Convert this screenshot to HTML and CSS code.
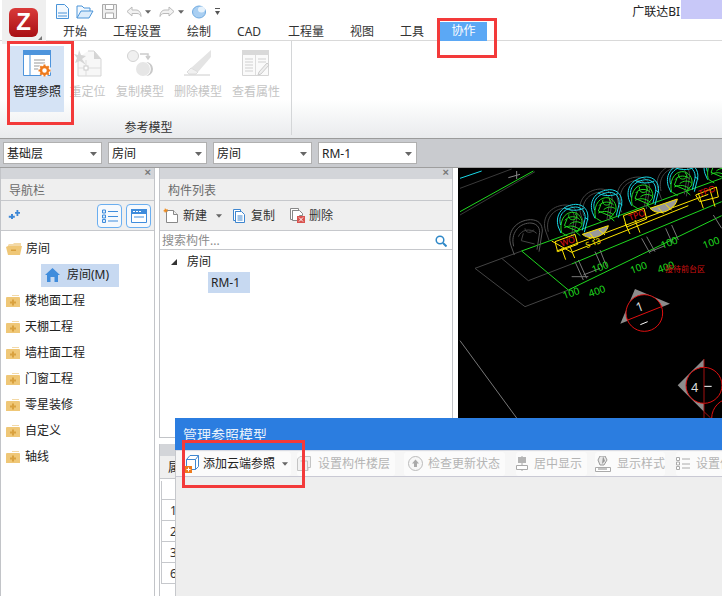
FILE: index.html
```html
<!DOCTYPE html>
<html lang="zh-CN">
<head>
<meta charset="utf-8">
<title>管理参照模型</title>
<link rel="stylesheet" href="styles.css">
</head>
<body>
<svg class="defs" width="0" height="0" aria-hidden="true">
  <symbol id="folder" viewBox="0 0 14 12">
    <path d="M6 0h7v1H6z" fill="#f3d9a6"/>
    <path d="M1 2h12a1 1 0 0 1 1 1v9H0V3a1 1 0 0 1 1-1z" fill="#efc777"/>
    <path d="M6 4.500h2v2h2v2H8v2H6v-2H4v-2h2z" fill="#d9a13f"/>
  </symbol>
  <symbol id="caret" viewBox="0 0 7 4"><path d="M0 0h7L3.500 4z" fill="#666"/></symbol>
</svg>
<div class="app">
  <header class="top">
    <div class="logo-cell">
      <div class="logo">Z</div>
      <svg class="logo-grip" width="4" height="4" viewBox="0 0 4 4"><path d="M4 0v4H0z" fill="#777"/></svg>
    </div>
    <div class="top-main">
      <div class="qat">
        <svg width="15" height="15" viewBox="0 0 15 15"><path d="M1.500 .5h8l4 4v10h-12z" fill="#f4f9fe" stroke="#4a94d8"/><path d="M3 9h9M3 12h9" stroke="#4a94d8"/></svg>
        <svg class="q1" width="18" height="15" viewBox="0 0 18 15"><path d="M1 14V2h5l2 2h6v3" fill="#f4f9fe" stroke="#4a94d8"/><path d="M1 14l4-7h12l-4 7z" fill="#dcecfb" stroke="#4a94d8"/></svg>
        <svg class="q2" width="15" height="15" viewBox="0 0 15 15"><path d="M.5 .5h14v14H.5z" fill="#eee" stroke="#aaa"/><path d="M3.500 .5h8v5h-8zM3.500 9h8v5.500h-8z" fill="#fff" stroke="#aaa"/></svg>
        <svg class="q3" width="16" height="12" viewBox="0 0 16 12"><path d="M6 1L1 5.500 6 10V7.500h5c2 0 3 1 4 3 0-4-2-6.500-5-6.500H6z" fill="#f2f2f2" stroke="#bbb"/></svg>
        <svg class="q4" width="6" height="4"><use href="#caret"/></svg>
        <svg class="q5" width="16" height="12" viewBox="0 0 16 12"><path d="M10 1l5 4.500L10 10V7.500H5c-2 0-3 1-4 3 0-4 2-6.500 5-6.500h4z" fill="#f2f2f2" stroke="#bbb"/></svg>
        <svg class="q4" width="6" height="4"><use href="#caret"/></svg>
        <svg class="q6" width="15" height="14" viewBox="0 0 15 14"><ellipse cx="7" cy="7" rx="6.500" ry="6" fill="#a9cff2" stroke="#6ea9df"/><ellipse cx="9.500" cy="4.500" rx="3.500" ry="3" fill="#e6f2fc"/></svg>
        <svg class="q7" width="5" height="7" viewBox="0 0 5 7"><path d="M0 0h5v1H0zM0 3h5L2.500 7z" fill="#555"/></svg>
        <span class="account">广联达BI</span>
        <span class="account-mask"></span>
      </div>
      <nav class="tabs">
        <span class="tab t1">开始</span>
        <span class="tab t2">工程设置</span>
        <span class="tab t3">绘制</span>
        <span class="tab t4">CAD</span>
        <span class="tab t5">工程量</span>
        <span class="tab t6">视图</span>
        <span class="tab t7">工具</span>
        <span class="tab active">协作</span>
      </nav>
    </div>
  </header>

  <section class="ribbon">
    <div class="ribbon-group">
      <div class="ribbon-items">
        <div class="rb rb-on">
          <svg width="28" height="27" viewBox="0 0 28 27">
            <path d="M.5 .5h27v25H.5z" fill="#fff" stroke="#4d94dc"/>
            <path d="M0 0h28v5H0z" fill="#4d94dc"/>
            <path d="M7 5v20" stroke="#4d94dc"/>
            <path d="M11 10h11M11 13h11M11 16h7M11 19h6" stroke="#999"/>
            <circle cx="21.500" cy="20" r="6.500" fill="#fff"/>
            <circle cx="21.500" cy="20.500" r="3.500" fill="#fff" stroke="#ee7a1c" stroke-width="2.500"/>
            <path d="M21.500 14.500v2M21.500 24.500v2M15.500 20.500h2M25.500 20.500h2M17.300 16.300l1.400 1.400M24.300 23.300l1.400 1.400M25.700 16.300l-1.400 1.400M18.700 23.300l-1.400 1.400" stroke="#ee7a1c" stroke-width="2"/>
          </svg>
          <span>管理参照</span>
        </div>
        <div class="rb rb-b">
          <svg width="28" height="27" viewBox="0 0 28 27">
            <path d="M4 8v18h23V9l-7-8h-6" fill="#f7f7f7" stroke="#d5d5d5"/>
            <path d="M20 1l7 8h-7z" fill="#d5d5d5"/>
            <path d="M4 18h23M12 10v16" stroke="#ddd"/>
            <rect x="10" y="16" width="4" height="4" fill="#fff" stroke="#ccc"/>
            <path d="M5 0l2 5 5 1-4 3 4 6-6-4-5 2 2-5-3-4 4 1z" fill="#d5d5d5"/>
          </svg>
          <span>重定位</span>
        </div>
        <div class="rb rb-c">
          <svg width="28" height="27" viewBox="0 0 28 27">
            <circle cx="7" cy="6" r="5.500" fill="#f0f0f0" stroke="#d2d2d2"/>
            <circle cx="17" cy="19" r="7" fill="#e6e6e6"/>
            <path d="M20 12a7.500 7.500 0 0 1 0 14 7 7 0 0 0 0-14z" fill="#c9c9c9"/>
            <path d="M14 4h8v4M20 6l2 3 2-3" fill="none" stroke="#ccc" stroke-width="1.500"/>
          </svg>
          <span>复制模型</span>
        </div>
        <div class="rb rb-d">
          <svg width="28" height="27" viewBox="0 0 28 27">
            <path d="M27 0v7L14 22l-7-4z" fill="#e4e4e4"/>
            <path d="M7 18l7 4-2 2H5l-2-2z" fill="#f1f1f1" stroke="#ddd"/>
            <path d="M0 25h26" stroke="#ccc"/>
          </svg>
          <span>删除模型</span>
        </div>
        <div class="rb rb-e">
          <svg width="28" height="27" viewBox="0 0 28 27">
            <path d="M.5 .5h26v25H.5z" fill="#fafafa" stroke="#d5d5d5"/>
            <path d="M0 0h27v5H0z" fill="#d9d9d9"/>
            <path d="M13.500 5v20" stroke="#ddd"/>
            <path d="M3 9h8M3 12h8M3 15h8M3 18h8M3 21h8M16 9h8M16 12h8" stroke="#d0d0d0"/>
            <path d="M25 13l2 2-8 9-3 1 1-3z" fill="#eee" stroke="#ccc"/>
          </svg>
          <span>查看属性</span>
        </div>
      </div>
      <div class="group-title">参考模型</div>
    </div>
  </section>

  <section class="selectors">
    <div class="sel">基础层<svg width="7" height="4"><use href="#caret"/></svg></div>
    <div class="sel">房间<svg width="7" height="4"><use href="#caret"/></svg></div>
    <div class="sel">房间<svg width="7" height="4"><use href="#caret"/></svg></div>
    <div class="sel">RM-1<svg width="7" height="4"><use href="#caret"/></svg></div>
  </section>

  <main class="work">
    <aside class="panel nav-panel">
      <div class="dock"><span class="x">×</span></div>
      <div class="p-title">导航栏</div>
      <div class="p-tools nav-tools">
        <svg class="pin" width="12" height="9" viewBox="0 0 12 9"><path d="M3 4h2v1.800h1.800v2H5V9H3V7.800H.8v-2H3zM8.500 0h1.800v2H12v1.800h-1.700V6H8.500V3.800H7V2h1.500z" fill="#3d87d6"/></svg>
        <span class="view-btn">
          <svg width="16" height="14" viewBox="0 0 16 14"><path d="M.5 1h3v3h-3zM.5 6h3v3h-3zM.5 10.500h3v3h-3z" fill="#dcebfa" stroke="#3f8cdc"/><path d="M6 2.500h10M6 7.500h10M6 12h10" stroke="#3f8cdc"/></svg>
        </span>
        <span class="view-btn">
          <svg width="16" height="14" viewBox="0 0 16 14"><path d="M.5 .5h15v13H.5z" fill="#fff" stroke="#3f8cdc"/><path d="M0 0h16v5H0z" fill="#3f8cdc"/><path d="M2 2.500h2M5 2.500h2M8 2.500h2" stroke="#fff"/><path d="M3 8h10" stroke="#9fc6ee" stroke-width="2"/></svg>
        </span>
      </div>
      <ul class="nav-tree">
        <li class="open-row">
          <svg width="16" height="12" viewBox="0 0 16 12"><path d="M2 2l1-1h4l1-1h7v3H2z" fill="#f3d9a6"/><path d="M2 3h14l-2 9H2L0 4z" fill="#efc777"/><path d="M5 6.500h5v1.500H5z" fill="#d9a13f"/></svg>
          <span>房间</span>
        </li>
        <li class="sub-row">
          <span class="sub-sel">
            <svg width="15" height="14" viewBox="0 0 15 14"><path d="M7.500 0L15 7h-2v7H9.500V9h-4v5H2V7H0z" fill="#3f8cdc"/></svg>
            <span>房间(M)</span>
          </span>
        </li>
        <li><svg width="14" height="12"><use href="#folder"/></svg><span>楼地面工程</span></li>
        <li><svg width="14" height="12"><use href="#folder"/></svg><span>天棚工程</span></li>
        <li><svg width="14" height="12"><use href="#folder"/></svg><span>墙柱面工程</span></li>
        <li><svg width="14" height="12"><use href="#folder"/></svg><span>门窗工程</span></li>
        <li><svg width="14" height="12"><use href="#folder"/></svg><span>零星装修</span></li>
        <li><svg width="14" height="12"><use href="#folder"/></svg><span>自定义</span></li>
        <li><svg width="14" height="12"><use href="#folder"/></svg><span>轴线</span></li>
      </ul>
    </aside>

    <div class="mid">
      <section class="panel comp-panel">
        <div class="dock"><span class="x">×</span></div>
        <div class="p-title">构件列表</div>
        <div class="p-tools comp-tools">
          <span class="ct ct-new">
            <svg width="15" height="15" viewBox="0 0 15 15"><path d="M3.500 2.500h7l4 4v8h-11z" fill="#fff" stroke="#888"/><path d="M10.500 2.500v4h4" fill="#eee" stroke="#888"/><path d="M2 0l1 1.500L5 1 4 2.500 5 4 3 3.500 2 5 1.500 3.500 0 3l1.500-1z" fill="#ee8a1c"/></svg>
            <span>新建</span>
            <svg class="ct-caret" width="6" height="4"><use href="#caret"/></svg>
          </span>
          <span class="ct ct-copy">
            <svg width="12" height="14" viewBox="0 0 12 14"><path d="M.5 .5h7v2h-5v9h-2z" fill="#fff" stroke="#3f86cf"/><path d="M2.500 2.500h6l3 3v8h-9z" fill="#fff" stroke="#3f86cf"/><path d="M4.500 7h5M4.500 9h5M4.500 11h5" stroke="#3f86cf"/></svg>
            <span>复制</span>
          </span>
          <span class="ct ct-del">
            <svg width="15" height="15" viewBox="0 0 15 15"><path d="M.5 .5h8v2h-6v9h-2z" fill="#fff" stroke="#888"/><path d="M2.500 2.500h7l3 3v2h-3v5h-7z" fill="#fff" stroke="#888"/><rect x="7" y="8" width="8" height="7" fill="#d9534f"/><path d="M9 9.500l4 4M13 9.500l-4 4" stroke="#fff"/></svg>
            <span>删除</span>
          </span>
        </div>
        <div class="search">
          <span>搜索构件...</span>
          <svg width="12" height="12" viewBox="0 0 12 12"><circle cx="5" cy="5" r="3.800" fill="none" stroke="#2f88c8" stroke-width="1.500"/><path d="M8 8l3.500 3.500" stroke="#2f88c8" stroke-width="2"/></svg>
        </div>
        <div class="comp-tree">
          <div class="ct-root">
            <svg width="6" height="6" viewBox="0 0 6 6"><path d="M6 0v6H0z" fill="#333"/></svg>
            <span>房间</span>
          </div>
          <div class="ct-child"><span>RM-1</span></div>
        </div>
      </section>
      <section class="lower">
        <div class="dock"></div>
        <div class="lower-tab">属</div>
        <div class="lower-table">
          <div class="row"></div>
          <div class="row">1</div>
          <div class="row">2</div>
          <div class="row">3</div>
          <div class="row">6</div>
        </div>
      </section>
    </div>

    <div class="cad">
      <svg width="264" height="250" viewBox="9 9 792 750" aria-label="CAD 图纸">
        <defs>
          <g id="seat-back" fill="none" stroke-width="3">
            <path d="M-58 20C-72-22-42-56 0-58 25-58 36-44 36-24L26 38M-50 22C-60-16-36-46-2-48 18-48 28-36 28-20L20 32M-58 20l10 28"/>
          </g>
          <g id="seat" fill="none" stroke-width="3">
            <path stroke="#16d8e6" d="M-40 14C-52-26-24-52 12-54 36-54 52-36 48-10L38 30M-33 8C-43-22-20-44 12-46 30-46 43-30 40-10L32 24M-40 14L-32 32M-22-44C-8-34 20-34 36-42M40-14L50-8"/>
            <path stroke="#1fd81f" d="M-30 32C-38 0-24-28 0-30 20-32 36-10 30 10L14 30M-20-6C-10-20 14-20 24-8M-14-10L-22 10 20 28M-6 6C6-4 20-4 30 4M-22 16C-6 8 10 10 24 22M-8-24C-12-14-4-6 6-8 16-10 18-20 10-26M-28 32L-12 42M14 30L26 40"/>
          </g>
        </defs>
        <g fill="none" stroke-width="3">
          <path d="M15 40L80 18" stroke="#19d9e8"/>
          <path d="M15 70L170 12M15 150L240 20" stroke="#3a3a3a"/>
          <path d="M15 140L235 18" stroke="#1fd81f"/>
          <path d="M160 38L195 28M185 18v24" stroke="#888"/>
          <path d="M60 310L200 258M60 310L210 425 340 375M140 280L220 347 350 297" stroke="#444"/>
          <path d="M15 527L185 759" stroke="#777"/>
          <path d="M200 258L800 40" stroke="#1fd81f"/>
          <path d="M200 258L340 375 800 152M350 297L800 110" stroke="#1fd81f"/>
          <path d="M290 228L350 262 700 122M305 258L760 88" stroke="#ffe600"/>
          <path d="M320 250l12 34M345 245l14 34M510 175l15 32M540 165l15 38M730 85l15 45M765 75l15 50" stroke="#ffe600"/>
          <path d="M360 290l25 55M370 285l25 55M350 335h50M420 260l20 45M435 255l20 50M560 220l25 45M575 215l25 45M632 190l20 45M650 180l20 45M775 150l25 40" stroke="#777"/>
          <path d="M385 330l50-20M585 260l45-18" stroke="#777"/>
          <use href="#seat-back" x="226" y="222" stroke="#555"/>
          <path d="M190 215c8-20 35-28 55-10M205 205l-6 22 40 10M210 190c0 14 20 16 26 4" stroke="#444"/>
          <use href="#seat-back" x="330" y="178" stroke="#444"/>
          <use href="#seat-back" x="436" y="130" stroke="#444"/>
          <use href="#seat-back" x="548" y="94" stroke="#444"/>
          <use href="#seat-back" x="668" y="56" stroke="#444"/>
          <use href="#seat" x="350" y="172"/>
          <use href="#seat" x="452" y="128"/>
          <use href="#seat" x="562" y="90"/>
          <use href="#seat" x="680" y="50"/>
          <use href="#seat" x="790" y="12"/>
          <path d="M382 208l78-26c-6 28-48 50-78 26z" fill="#999" stroke="#ffe600"/>
          <path d="M585 130l82-28c-4 28-52 58-82 28z" fill="#999" stroke="#ffe600"/>
          <path d="M405 205l15 20M432 195l18 15M610 128l15 18M632 118l18 18" stroke="#ffe600"/>
          <path d="M300 230l60-22 8 30-60 22zM505 152l62-22 8 32-60 24zM722 90l62-24 6 30-56 14z" stroke="#ffe600"/>
        </g>
        <text class="cad-r" transform="translate(320 245) rotate(-20)">WO</text>
        <text class="cad-r" transform="translate(525 168) rotate(-20)">TPO</text>
        <text class="cad-r" transform="translate(735 95) rotate(-20)">TPO</text>
        <text class="cad-y" transform="translate(395 250) rotate(-20)">S 13</text>
        <text class="cad-g" transform="translate(415 325) rotate(-20)">100</text>
        <text class="cad-g" transform="translate(530 327) rotate(-20)">100</text>
        <text class="cad-g" transform="translate(612 325) rotate(-20)">400</text>
        <text class="cad-g" transform="translate(622 252) rotate(-20)">100</text>
        <text class="cad-g" transform="translate(748 252) rotate(-20)">100</text>
        <text class="cad-g" transform="translate(328 403) rotate(-20)">100</text>
        <text class="cad-g" transform="translate(405 397) rotate(-20)">400</text>
        <text class="cad-b" x="630" y="320">接待前台区</text>
        <path d="M540 372L645 416 496 476z" fill="#8c8c8c"/>
        <circle cx="568" cy="444" r="55" fill="#000" stroke="#e01010" stroke-width="3"/>
        <path d="M516 466L622 424" stroke="#e01010" stroke-width="3"/>
        <text class="cad-w" transform="translate(548 442) rotate(-20)">1</text>
        <path d="M556 479l22-9" stroke="#fff" stroke-width="3"/>
        <path d="M747 582L668 661 747 740z" fill="#8c8c8c"/>
        <circle cx="747" cy="661" r="54" fill="#000" stroke="#e01010" stroke-width="3"/>
        <path d="M747 582V759M747 740l20 19" stroke="#a01010" stroke-width="3" fill="none"/>
        <text class="cad-w" x="708" y="681">4</text>
        <path d="M748 664h22" stroke="#fff" stroke-width="3"/>
        <circle cx="830" cy="760" r="60" fill="none" stroke="#e01010" stroke-width="3"/>
      </svg>
    </div>
  </main>

  <div class="dialog">
    <div class="dlg-title">管理参照模型</div>
    <div class="dlg-tools">
      <span class="dt dt-on">
        <svg width="14" height="18" viewBox="0 0 14 18"><path d="M1.500 4.500L5 .5h8.500v11l-3 3H1.500z" fill="#fff" stroke="#3f86cf"/><path d="M1.500 4.500h9v10M10.500 4.500l3-4" fill="none" stroke="#3f86cf"/><rect y="11" width="7" height="7" fill="#ee7a1c"/><path d="M3.500 12.500v4M1.500 14.500h4" stroke="#fff"/></svg>
        <span>添加云端参照</span>
        <svg class="dt-caret" width="6" height="4"><use href="#caret"/></svg>
      </span>
      <span class="dt dt-floor">
        <svg width="14" height="15" viewBox="0 0 14 15"><path d="M3 .5h10.500v11H11v3H.5V3z" fill="#f2f2f2" stroke="#c4c4c4"/><path d="M3.500 5h7v9" fill="none" stroke="#c4c4c4"/></svg>
        <span>设置构件楼层</span>
      </span>
      <span class="dt-sep"></span>
      <span class="dt dt-check">
        <svg width="15" height="15" viewBox="0 0 15 15"><circle cx="7.500" cy="7.500" r="7" fill="#f7f7f7" stroke="#bbb"/><path d="M7.500 3.500l3.500 4H9v3.500H6V7.500H4z" fill="#aaa"/></svg>
        <span>检查更新状态</span>
      </span>
      <span class="dt dt-center">
        <svg width="12" height="15" viewBox="0 0 12 15"><path d="M6 0v15" stroke="#aaa"/><path d="M2 1h8v6H2z" fill="#b5b5b5"/><path d="M.5 9.500h11v4H.5z" fill="#fff" stroke="#aaa"/></svg>
        <span>居中显示</span>
      </span>
      <span class="dt dt-style">
        <svg width="16" height="16" viewBox="0 0 16 16"><path d="M5 0h5l2 4-3 5H5L3 4z" fill="#e8e8e8" stroke="#999"/><path d="M8 0l2 5-3 3" fill="#999"/><path d="M.5 11.500h15v4H.5z" fill="#fff" stroke="#aaa"/><path d="M3 13h9" stroke="#888"/></svg>
        <span>显示样式</span>
      </span>
      <span class="dt dt-offset">
        <svg width="14" height="13" viewBox="0 0 14 13"><path d="M.5 .5h3v3h-3zM.5 5h3v3h-3zM.5 9.500h3v3h-3z" fill="#fff" stroke="#aaa"/><path d="M6 2h8M6 7h8M6 11h8" stroke="#aaa"/></svg>
        <span>设置偏移</span>
      </span>
    </div>
    <div class="dlg-body"></div>
  </div>

  <span class="mark mark-ref"></span>
  <span class="mark mark-tab"></span>
  <span class="mark mark-add"></span>
</div>
</body>
</html>
```

FILE: styles.css
```css
* { box-sizing: border-box; }
html, body { margin: 0; padding: 0; }
body {
  width: 722px; height: 596px; overflow: hidden; background: #fff; color: #222;
  font: 12px/16px "Noto Sans", "Noto Sans CJK SC", sans-serif;
}
svg { display: block; flex: none; }
.defs { position: absolute; }
.app { position: relative; width: 722px; height: 596px; overflow: hidden; display: flex; flex-direction: column; }

/* top */
.top { display: flex; height: 41px; background: #fff; border-bottom: 1px solid #d9d9d9; flex: none; }
.logo-cell { position: relative; width: 44px; height: 44px; margin-left: 2px; background: #efefef; padding: 8px 0 0 7px; z-index: 1; flex: none; }
.logo {
  width: 29px; height: 29px; border-radius: 6px;
  background: linear-gradient(#d93a3a, #a80f14);
  color: #fff; font: 700 24px/28px "Liberation Sans", sans-serif; text-align: center;
}
.logo-grip { position: absolute; right: 4px; bottom: 4px; }
.top-main { flex: 1; display: flex; flex-direction: column; min-width: 0; padding-left: 9px; }
.qat { height: 22px; display: flex; align-items: center; padding-top: 1px; }
.q1 { margin-left: 6px; }
.q2 { margin-left: 8px; }
.q3 { margin-left: 9px; }
.q4 { margin-left: 3px; }
.q5 { margin-left: 8px; }
.q6 { margin-left: 8px; }
.q7 { margin-left: 8px; }
.account { margin-left: auto; font-size: 12px; line-height: 16px; }
.account-mask { width: 41px; height: 19px; margin-top: -1px; margin-left: 1px; background: #c8c8f8; align-self: flex-start; }
.tabs { display: flex; height: 18px; align-items: flex-start; font-size: 12px; color: #333; }
.tab { line-height: 20px; }
.t1 { margin-left: 8px; }
.t2 { margin-left: 26px; }
.t3 { margin-left: 26px; }
.t4 { margin-left: 26px; }
.t5 { margin-left: 27px; }
.t6, .t7 { margin-left: 26px; }
.tab.active { margin-left: 16px; width: 47px; height: 19px; background: #5ba8f5; color: #fff; text-align: center; line-height: 18px; }

/* ribbon */
.ribbon { height: 98px; flex: none; display: flex; background: linear-gradient(#fff 0, #fff 60%, #e9ebed 100%); border-bottom: 1px solid #9b9b9b; }
.ribbon-group { width: 292px; padding: 5px 0 0 10px; border-right: 1px solid #d4d6d8; margin-bottom: 3px; display: flex; flex-direction: column; }
.ribbon-items { display: flex; height: 66px; }
.rb { height: 66px; width: 54px; display: flex; flex-direction: column; align-items: center; color: #c4c4c4; white-space: nowrap; padding-top: 4px; }
.rb svg { margin-bottom: 7px; }
.rb span { line-height: 16px; }
.rb-on { background: #d5e3f5; color: #222; }
.rb-b { width: 47px; }
.rb-c { width: 58px; }
.rb-d { width: 58px; }
.rb-e { width: 58px; }
.group-title { margin: 8px 0 0 -10px; width: 291px; text-align: center; font-size: 12px; line-height: 16px; color: #333; padding-left: 6px; }

/* selectors */
.selectors { height: 29px; flex: none; background: #c9cbcf; border-bottom: 1px solid #9e9e9e; display: flex; gap: 6px; padding: 3px 0 0 3px; }
.sel { width: 99px; height: 22px; background: #fff; border: 1px solid #b0b0b0; display: flex; align-items: center; justify-content: space-between; padding: 1px 4px 0 3px; color: #222; }

/* workspace */
.work { flex: 1; display: flex; min-height: 0; background: #fff; }
.panel { background: #fff; display: flex; flex-direction: column; }
.nav-panel { width: 155px; flex: none; border-left: 1px solid #c2c4c8; border-right: 1px solid #c2c4c8; }
.dock { height: 11px; background: #d3d5d9; position: relative; flex: none; }
.x { position: absolute; right: 3px; top: -3px; font: 700 11px/14px "Liberation Sans", sans-serif; color: #777; }
.p-title { height: 22px; background: #efefef; border-bottom: 1px solid #c6c8cc; padding-left: 8px; line-height: 23px; color: #6b6b6b; flex: none; }
.p-tools { height: 30px; background: #efefef; border-bottom: 1px solid #c6c8cc; display: flex; align-items: center; flex: none; }
.nav-tools { padding-left: 7px; gap: 4px; }
.nav-tools .pin { margin-right: 73px; margin-top: -2px; }
.view-btn { width: 25px; height: 24px; border: 1px solid #6aaef0; border-radius: 4px; background: #f6f9fd; display: flex; align-items: center; justify-content: center; }
.nav-tree { list-style: none; margin: 0; padding: 5px 0 0 5px; }
.nav-tree li { height: 26px; display: flex; align-items: center; gap: 5px; color: #222; }
.nav-tree .open-row { height: 26px; gap: 4px; }
.sub-row { padding-left: 35px; }
.sub-sel { height: 23px; width: 78px; background: #c7d9f1; display: flex; align-items: center; gap: 7px; padding-left: 4px; }

.mid { width: 294px; margin-left: 4px; flex: none; display: flex; flex-direction: column; }
.comp-panel { height: 270px; border-left: 1px solid #c2c4c8; border-right: 1px solid #c2c4c8; border-bottom: 1px solid #c2c4c8; flex: none; }
.comp-tools { padding-left: 3px; }
.ct { display: flex; align-items: center; gap: 5px; color: #333; }
.ct-caret { margin-left: 4px; }
.ct-new { margin-right: 11px; }
.ct-copy { gap: 6px; margin-right: 15px; }
.ct-del { gap: 4px; }
.search { height: 19px; display: flex; align-items: center; justify-content: space-between; padding: 2px 5px 0 2px; border-bottom: 1px solid #c6c8cc; color: #8c8c8c; flex: none; }
.comp-tree { padding-top: 2px; }
.ct-root { height: 20px; display: flex; align-items: center; gap: 10px; padding-left: 11px; }
.ct-child { padding-left: 48px; }
.ct-child span { display: block; width: 42px; height: 21px; background: #c7d9f1; padding-left: 3px; line-height: 22px; }
.lower { flex: 1; margin-top: 6px; background: #fff; border-left: 1px solid #c2c4c8; }
.lower .dock { height: 12px; }
.lower-tab { height: 23px; background: #efefef; padding-left: 8px; line-height: 23px; border-bottom: 1px solid #c6c8cc; }
.lower-table { margin: 2px 0 0 1px; border-left: 1px solid #c6c8cc; background: #fff; }
.row { height: 21px; border-bottom: 1px solid #c6c8cc; padding-left: 8px; line-height: 22px; color: #333; }
.row:first-child { height: 19px; }

.cad { flex: 1; margin-left: 5px; background: #000; overflow: hidden; min-width: 0; }
.cad text { font-family: "Noto Sans", "Noto Sans CJK SC", sans-serif; }
.cad .cad-g { font-size: 30px; fill: #1fd81f; }
.cad .cad-r { font-size: 26px; fill: #e01010; }
.cad .cad-y { font-size: 24px; fill: #ffe600; }
.cad .cad-b { font-size: 24px; fill: #d01010; }
.cad .cad-w { font-size: 38px; fill: #ddd; }

/* dialog overlay */
.dialog { position: absolute; left: 175px; top: 418px; width: 560px; height: 178px; display: flex; flex-direction: column; background: #eee; z-index: 2; border-left: 1px solid #c6c8cc; }
.dlg-title { height: 32px; background: #2b7de0; color: #e8f1fb; font-size: 14px; line-height: 32px; padding: 1px 0 0 8px; margin-left: -1px; flex: none; }
.dlg-tools { height: 27px; background: #f6f6f6; border-bottom: 1px solid #c9c9d4; border-top: 1px solid #d8dbe4; display: flex; align-items: center; padding-left: 9px; color: #b4b4b4; white-space: nowrap; flex: none; }
.dt { display: flex; align-items: center; height: 24px; background: #fbfbfb; border-radius: 3px; gap: 5px; }
.dt-on { color: #222; margin-right: 6px; gap: 4px; }
.dt-caret { margin-left: 3px; margin-right: 3px; }
.dt-floor { padding-right: 5px; gap: 7px; }
.dt-sep { width: 1px; height: 18px; background: #c9c9c9; margin: 0 5px 0 4px; }
.dt-check { padding-left: 4px; padding-right: 5px; }
.dt-center { margin-left: 11px; padding-right: 5px; gap: 6px; }
.dt-style { margin-left: 8px; gap: 6px; }
.dt-offset { margin-left: 11px; gap: 6px; }
.dlg-body { flex: 1; background: #eee; }

/* red annotation frames */
.mark { position: absolute; border: 3px solid #f33a3a; z-index: 3; }
.mark-ref { left: 7px; top: 41px; width: 67px; height: 84px; }
.mark-tab { left: 437px; top: 18px; width: 60px; height: 40px; }
.mark-add { left: 182px; top: 440px; width: 123px; height: 48px; }
```
